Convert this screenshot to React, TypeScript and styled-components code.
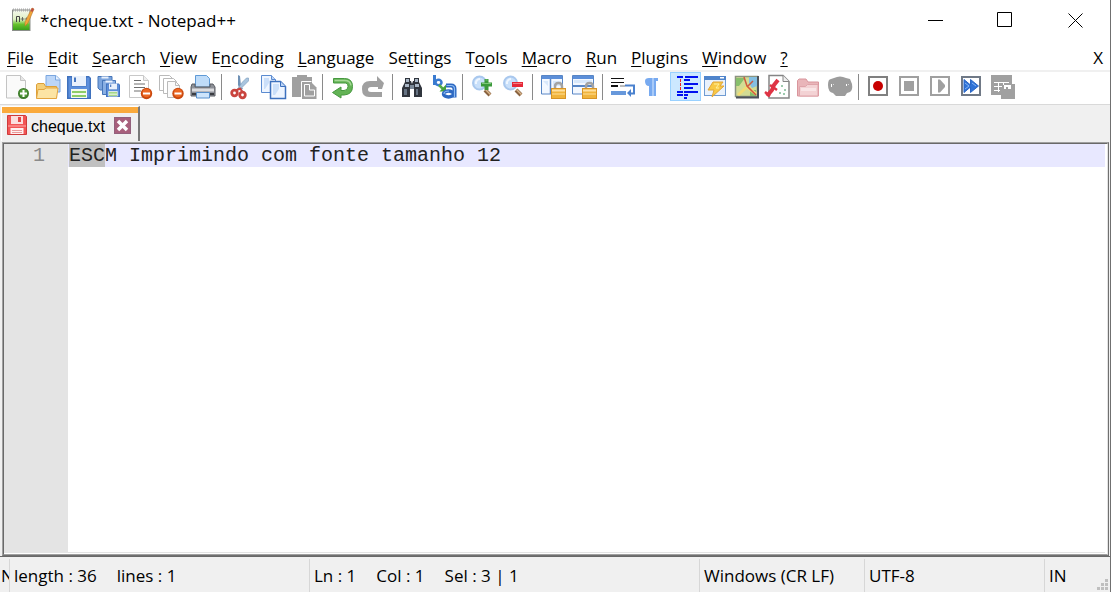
import React from "react";
import styled, { createGlobalStyle } from "styled-components";

const UI_FONT = `"Open Sans", "Noto Sans", sans-serif`;

const GlobalStyle = createGlobalStyle`
  *, *::before, *::after { box-sizing: border-box; }
  html, body { margin: 0; padding: 0; background: #fff; }
  body { font-family: ${UI_FONT}; color: #000; }
  button { font: inherit; color: inherit; background: none; border: 0; margin: 0; padding: 0; }
`;

const AppWindow = styled.div`
  display: flex;
  flex-direction: column;
  min-height: 100vh;
  background: #f0f0f0;
  border-right: 1px solid #707070;
  overflow: hidden;
`;

const TitleBar = styled.header`
  display: flex;
  align-items: center;
  height: 40px;
  padding-left: 11px;
  background: #fff;
`;

const TitleText = styled.h1`
  flex: 1;
  margin: 0;
  padding: 2px 0 0 5px;
  font-size: 17px;
  font-weight: 400;
  line-height: 24px;
  white-space: nowrap;
`;

const CaptionButton = styled.button`
  display: flex;
  align-items: center;
  justify-content: center;
  width: 70px;
  height: 40px;
`;

const MenuBar = styled.nav`
  display: flex;
  align-items: center;
  gap: 14px;
  height: 30px;
  padding: 6px 7px 0;
  background: #fff;
`;

const MenuItem = styled.button`
  font-size: 17px;
  line-height: 24px;
  white-space: nowrap;

  u {
    text-decoration-thickness: 1px;
    text-underline-offset: 2px;
  }
`;

const CloseDocument = styled(MenuItem)`
  margin-left: auto;
`;

const ToolBar = styled.div`
  display: flex;
  height: 35px;
  padding-left: 2px;
  background: #fff;
  border-top: 2px solid #f0f0f0;
  border-bottom: 1px solid #d9d9d9;
`;

const ToolButton = styled.button<{ $active?: boolean }>`
  display: flex;
  flex: none;
  width: 31px;
  height: 29px;
  padding: ${(p) => (p.$active ? "2px 3px" : "3px 4px")};
  border: ${(p) => (p.$active ? "1px solid #99d1ff" : "0")};
  background: ${(p) => (p.$active ? "#cce8ff" : "transparent")};
`;

const ToolDivider = styled.span`
  flex: none;
  width: 8px;
  padding: 2px 0 0 2px;

  &::before {
    content: "";
    display: block;
    width: 1px;
    height: 26px;
    background: #8a8a8a;
  }
`;

const Glyph = styled.svg`
  display: block;
  flex: none;
  overflow: visible;
`;

const TabStrip = styled.div`
  display: flex;
  height: 37px;
  padding: 1px 0 0 1px;
`;

const Tab = styled.div`
  display: flex;
  align-items: center;
  gap: 4px;
  height: 35px;
  padding: 0 7px 0 5px;
  border-left: 1px solid #fff;
  border-right: 2px solid #787878;
  border-top: 1px solid #fff;
  box-shadow: inset 0 6px 0 #faaa3c;
`;

const TabLabel = styled.span`
  padding-top: 6px;
  font-family: "Liberation Sans", sans-serif;
  font-size: 16px;
  line-height: 20px;
`;

const TabIcon = styled.span`
  padding-top: 2px;
`;

const TabClose = styled.button`
  margin: 2px 0 0 5px;
`;

const EditorFrame = styled.main`
  display: flex;
  flex: 1;
  margin: 0 1px 0 2px;
  background: #fff;
  border-style: solid;
  border-width: 1px;
  border-color: #a0a0a0 #707070 #707070 #a0a0a0;
`;

const EditorInner = styled.div`
  display: flex;
  flex: 1;
  border-style: solid;
  border-width: 1px;
  border-color: #696969 #e3e3e3 #a0a0a0 #696969;
`;

const Gutter = styled.div`
  flex: none;
  width: 64px;
  padding-right: 23px;
  margin-bottom: 1px;
  background: #e4e4e4;
  color: #8a8a8a;
  font: 20px/23px "Liberation Mono", monospace;
  text-align: right;
`;

const TextArea = styled.textarea`
  flex: 1;
  min-width: 0;
  margin: 0 2px 1px 0;
  padding: 0 0 0 1px;
  border: 0;
  border-bottom: 1px solid #e3e3e3;
  outline: 0;
  resize: none;
  color: #222;
  font: 20px/23px "Liberation Mono", monospace;
  background:
    linear-gradient(#c0c0c0, #c0c0c0) 1px 0 / 3ch 23px no-repeat,
    linear-gradient(#e8e8ff, #e8e8ff) 0 0 / 100% 23px no-repeat,
    #fff;
`;

const StatusBar = styled.footer`
  display: flex;
  height: 36px;
  padding-top: 2px;
  border-top: 1px solid #696969;
  background: #f0f0f0;
`;

const StatusCell = styled.div<{ $width?: number }>`
  display: flex;
  flex: ${(p) => (p.$width ? `0 0 ${p.$width}px` : "1 1 0")};
  gap: 20px;
  min-width: 0;
  padding: 5px 0 0 4px;
  border-left: 1px solid #d7d7d7;
  font-size: 17px;
  line-height: 24px;
  overflow: hidden;
  white-space: nowrap;

  &:first-child {
    padding-left: 1px;
    border-left: 0;
  }

  &:last-child {
    justify-content: space-between;
  }
`;

const SizeGrip = styled.svg`
  align-self: flex-end;
  margin: 0 2px 2px 0;
`;

const Plus = () => (
  <>
    <circle cx="17.5" cy="18.5" r="5.5" fill="#3e7d2c" />
    <circle cx="17.5" cy="18" r="4" fill="#589b3e" />
    <path d="M17.5 15v7M14 18.5h7" stroke="#fff" strokeWidth="2" />
  </>
);

const Minus = ({ x = 17 }: { x?: number }) => (
  <>
    <circle cx={x} cy="18.5" r="5.7" fill="#c9480f" />
    <circle cx={x} cy="18" r="4.3" fill="#ec6722" />
    <path d={`M${x - 3.5} 18.5h7`} stroke="#fff" strokeWidth="2" />
  </>
);

const Padlock = () => (
  <>
    <path d="M13 15v-3.5q0-3.500 3.500-3.500t3.500 3.500V15" fill="none" stroke="#a3a3a3" strokeWidth="2.500" />
    <rect x="9.500" y="13.500" width="14" height="10" fill="#f0b43c" stroke="#d79426" />
    <path d="M10 15.500h13" stroke="#ffe0a0" strokeWidth="2" />
    <path d="M10 19h13" stroke="#f8ca6a" strokeWidth="2" />
  </>
);

const Floppy = ({ size = 24, x = 0, y = 0 }: { size?: number; x?: number; y?: number }) => (
  <svg x={x} y={y} width={size} height={size} viewBox="0 0 24 24">
    <path d="M0 1h22l2 2v21H0z" fill="#3f71bd" />
    <path d="M1.500 2.500h3v9h15v-9h3v20h-21z" fill="#5c8fdc" />
    <path d="M5 1h14v10H5z" fill="#e9f1fc" />
    <path d="M7 2.500h2v4.500H7z" fill="#4676bf" />
    <path d="M4 14h16v9H4z" fill="#f4f9ee" />
    <path d="M5 16h14v2H5zM5 20h14v2H5z" fill="#8dcd68" />
  </svg>
);

const Magnifier = () => (
  <>
    <path d="M13 15l5 5" stroke="#8a6340" strokeWidth="4" />
    <path d="M13.500 14.500l5 5" stroke="#d7b48a" strokeWidth="1.500" />
    <circle cx="7.500" cy="8" r="6.500" fill="#c9e0fa" stroke="#a9c8ee" strokeWidth="2" />
    <path d="M4 9V7q1-3 4-3" fill="none" stroke="#eef6ff" strokeWidth="2" />
  </>
);

const MacroFrame = ({ stroke }: { stroke: string }) => (
  <rect x="1" y="2" width="18" height="18" fill="#fff" stroke={stroke} strokeWidth="2" />
);

const icons: Record<string, React.ReactNode> = {
  New: (
    <>
      <path d="M.5.5h14l5 5v17.500H.5z" fill="#fafafa" stroke="#c4c4c4" />
      <path d="M14.500.5v5h5" fill="#e6e6e6" stroke="#c4c4c4" />
      <Plus />
    </>
  ),
  Open: (
    <>
      <path d="M9 .5h10l4 4V17H9z" fill="#bcd6f8" stroke="#7aa6df" />
      <path d="M18.500.5v4.500H23" fill="#e8f2ff" stroke="#7aa6df" />
      <path d="M-.5 23V9.500l1.500-1h6l1.500 3H19.500V23z" fill="#f5cf77" stroke="#dda03a" />
      <path d="M1 14.500h6l2-1.500h12l-1.500 10.500H-.5z" fill="#fce4a4" stroke="#e3a540" />
    </>
  ),
  Save: <Floppy x={-1} />,
  "Save All": (
    <>
      <path d="M-1 1.500h14v4H3.500V15H1l-2-2z" fill="#7ba4dd" stroke="#4676b9" />
      <path d="M2.500 1.500h7v2h-7z" fill="#e9f1fc" />
      <path d="M3.500 5.500h13v4h-9v10h-4z" fill="#89afe3" stroke="#4676b9" />
      <path d="M6.500 5.500h7v2h-7z" fill="#e9f1fc" />
      <Floppy size={14} x={7} y={8} />
    </>
  ),
  Close: (
    <>
      <path d="M-.5.5h14l5 5v17H-.5z" fill="#fff" stroke="#c8c8c8" />
      <path d="M13.500.5v5h5" fill="#eee" stroke="#c8c8c8" />
      <path d="M4 5.500h7M4 9h11M4 12.500h11M4 16h7" stroke="#6e6e6e" />
      <Minus x={16.5} />
    </>
  ),
  "Close All": (
    <>
      <path d="M-1.500.5h10l3 3v12h-13z" fill="#fff" stroke="#bababa" />
      <path d="M2.500 3.500h10l3 3v12h-13z" fill="#fff" stroke="#bababa" />
      <path d="M6.500 6.500h8l4 4v12h-12z" fill="#fafafa" stroke="#bababa" />
      <path d="M14.500 6.500v4h4" fill="none" stroke="#bababa" />
      <Minus />
    </>
  ),
  Print: (
    <>
      <path d="M3.500.5h11l3 3V12h-14z" fill="#bfdcf9" stroke="#5f9ad6" />
      <path d="M0 9h3v3h15V9h3l2 3v9H-1v-9z" fill="#8d9097" stroke="#5a5d63" />
      <path d="M0 13.500h22v3H0z" fill="#dcdde0" />
      <path d="M0 18h22v2H0z" fill="#3b3d42" />
      <path d="M4.500 17.500h13v5.500h-13z" fill="#cde4fb" stroke="#578fcb" />
    </>
  ),
  Cut: (
    <>
      <path d="M7 0l2 1 1 10 2 3-3 1-2-5z" fill="#6f91b5" />
      <path d="M17.500 3v3l-6 6-3 3-2-1 5-7 4-4z" fill="#a9c5de" stroke="#7597ba" strokeWidth=".6" />
      <circle cx="3.500" cy="18" r="2.800" fill="none" stroke="#c9443e" strokeWidth="2.800" />
      <circle cx="11.500" cy="20" r="2.800" fill="none" stroke="#c9443e" strokeWidth="2.800" />
      <path d="M5 15.500l4-2 3 4" fill="none" stroke="#c9443e" strokeWidth="2" />
    </>
  ),
  Copy: (
    <>
      <path d="M-.5.5h10l4 4v13h-14z" fill="#eef5ff" stroke="#5b8bd0" />
      <path d="M2 3h5v5l-4 6H2z" fill="#cbdff9" />
      <path d="M9.500.5v4h4" fill="#bcd4f5" stroke="#5b8bd0" />
      <path d="M8.500 6.500h10l5 5v12h-15z" fill="#eef5ff" stroke="#3d71be" strokeWidth="1.500" />
      <path d="M11 9h6v5l-4 6h-2z" fill="#cbdff9" />
      <path d="M18.500 6.500v5h5" fill="#bcd4f5" stroke="#3d71be" />
    </>
  ),
  Paste: (
    <>
      <path d="M-1 2h5V0h10v2h5v20H-1z" fill="#a0a0a0" />
      <path d="M9 7h9l5.500 5.500V24H9z" fill="#a0a0a0" />
      <path d="M8.500 22V6.500h10" fill="none" stroke="#fff" />
      <path d="M11.500 9.500h5v5.500h5v6h-10z" fill="none" stroke="#fff" />
    </>
  ),
  Undo: (
    <>
      <path d="M1.500 3.500h11q8 0 8 8T12 20H9v3L.5 17.500 9 12v3.500h3q4 0 4-4T12 8H1.500z" fill="#63b355" stroke="#46983f" />
      <path d="M2.500 5.500h10q6 0 6.500 5" fill="none" stroke="#a5d896" strokeWidth="1.500" />
    </>
  ),
  Redo: <path d="M19 14h-4v-2H8q-3 0-3 2.500T8 17h11v5H6q-7 0-7-8t8-8h7V1l7 7z" fill="#a0a0a0" />,
  Find: (
    <>
      <path d="M3 3h5v3h1l1 3 1-3h1V3h5v4l3 6v9h-8v-8H8v8H0v-9l3-6z" fill="#30353d" />
      <path d="M4 4h3v3H4zM13 4h3v3h-3zM3 9h4v3H3zM13 9h4v3h-4z" fill="#a9b6c5" />
      <path d="M8 10h4v4H8z" fill="#7d8b9a" />
      <path d="M2 14h3v6H2zM14 14h2v6h-2z" fill="#667383" />
    </>
  ),
  Replace: (
    <>
      <path d="M1.500 0v10" stroke="#3a7bd0" strokeWidth="3" />
      <ellipse cx="5.500" cy="7.500" rx="3" ry="2.700" fill="none" stroke="#3a7bd0" strokeWidth="2.500" />
      <path d="M6 10l5 5" stroke="#55ab48" strokeWidth="2.500" />
      <path d="M13 9.500v7H6.500z" fill="#46a13c" />
      <path d="M13 10.500h5q3.500 0 3.500 3.500v8.500" fill="none" stroke="#2d69c2" strokeWidth="4" />
      <ellipse cx="15.500" cy="19" rx="5" ry="3" fill="#fff" stroke="#2d69c2" strokeWidth="3.500" />
      <path d="M13.500 10.500h4.500q3.500 0 3.500 3.500v8M11 19q0-3 5-3" fill="none" stroke="#8dbbf3" strokeWidth="1.200" />
    </>
  ),
  "Zoom In": (
    <>
      <Magnifier />
      <path d="M12.500 4h4v3.500H20v4h-3.500V15h-4v-3.500H9v-4h3.500z" fill="#3c9a3c" />
      <path d="M13.500 5h2M10 8.500h9" stroke="#7cc67a" />
    </>
  ),
  "Zoom Out": (
    <>
      <Magnifier />
      <path d="M9 7h11v5H9z" fill="#e52838" />
      <path d="M10 8.500h9" stroke="#f37b80" />
    </>
  ),
  "Synchronize Vertical Scrolling": (
    <>
      <path d="M-.5.500h21v18.500h-21z" fill="#f3f8ff" stroke="#5886c5" />
      <path d="M0 1h20v3H0z" fill="#5c8fd9" />
      <path d="M8.500 4v15" stroke="#5886c5" strokeWidth="1.500" />
      <path d="M11 6h8v5h-8zM1 6h5v5z" fill="#d8e8fb" />
      <Padlock />
    </>
  ),
  "Synchronize Horizontal Scrolling": (
    <>
      <path d="M-.5.500h21v18.500h-21z" fill="#f3f8ff" stroke="#5886c5" />
      <path d="M0 1h20v3H0z" fill="#5c8fd9" />
      <path d="M0 11h20" stroke="#5886c5" strokeWidth="2" />
      <path d="M1 5h18v3H1z" fill="#d8e8fb" />
      <Padlock />
    </>
  ),
  "Word Wrap": (
    <>
      <path d="M-1 3.500h13M-1 7.500h13" stroke="#111" />
      <path d="M-1 11h7" stroke="#111" strokeWidth="2" />
      <path d="M8 11h5" stroke="#777" />
      <path d="M-1 18h15" stroke="#6798db" strokeWidth="4" />
      <path d="M13 10.500h9v8h-4" fill="none" stroke="#4b82cf" strokeWidth="2" />
      <path d="M19 14v8l-4-4z" fill="#4b82cf" />
    </>
  ),
  "Show All Characters": (
    <>
      <path d="M2 6q0-3 4-3h9v3h-2v15h-3V6H9v15H6V11q-4 0-4-5z" fill="#78aaf0" />
      <path d="M9 3h2v18H9z" fill="#a8caf8" />
    </>
  ),
  "Show Indent Guide": (
    <>
      <path
        d="M3 2h6M11 2h13M10 5h6M10 9h14M10 13h9M3 17h6M10 17h14M3 20h6M10 20h4M10 23h3"
        stroke="#0010f0"
        strokeWidth="2"
      />
      <path d="M6.500 4v12" stroke="#f02020" strokeDasharray="3 1" />
    </>
  ),
  "User Defined Language": (
    <>
      <rect x="-.5" y="1.500" width="21" height="19" fill="#eaf2fc" stroke="#6f9bd2" />
      <path d="M-1 1h22v4H-1z" fill="#4f84cb" />
      <path d="M15 2h4v1.500h-4z" fill="#fff" />
      <path d="M8 7h10l-3 4h4L7 22l2-7H3z" fill="#f8c945" stroke="#e0a538" />
      <path d="M9 9h5l-3 4h3" fill="none" stroke="#fff0a0" />
    </>
  ),
  "Document Map": (
    <>
      <path d="M-.5 1.500h22v20h-22z" fill="#d3dc94" stroke="#8b9480" strokeWidth="1.500" />
      <path d="M13 2h8v9l-5 2-3-5z" fill="#84bfe2" />
      <path d="M0 3h9l-6 8H0zM14 15h6v6h-6z" fill="#87bf6c" />
      <path d="M2 20l9-8 9 7" fill="none" stroke="#f2dc74" strokeWidth="3" />
      <path d="M8 2l3 9 9 9M11 12l6-6" fill="none" stroke="#cf5a40" strokeWidth="1.500" />
      <path d="M22 1v21.500H0" fill="none" stroke="#4d5158" strokeWidth="2" />
    </>
  ),
  "Function List": (
    <>
      <path d="M2 .5h14l6 6V23H2z" fill="#fff" stroke="#858585" strokeWidth="1.500" />
      <path d="M16 .5v6h6" fill="#eee" stroke="#858585" />
      <path d="M0 21l5-6 2-5 4-5" fill="none" stroke="#df3344" strokeWidth="4" />
      <path d="M-2 17l5 4M3 10l7 5" stroke="#df3344" strokeWidth="2.500" />
      <path d="M15 10v2M18 14v2M12 18h2M16 19h2" stroke="#9dcaae" strokeWidth="2" />
    </>
  ),
  "Folder as Workspace": (
    <>
      <path d="M-.5 21V5.500L1 4h7l2 3h10.500v14z" fill="#e9b5b9" stroke="#d9959c" />
      <path d="M1.500 11.500h6l2-2h10.500v11.500h-18.500z" fill="#f3d2d4" stroke="#dfa4aa" />
      <path d="M3 13h15v3H3z" fill="#f9e5e6" />
    </>
  ),
  Monitoring: (
    <>
      <path d="M5 3q6-3 12 0l4 1 2 5q1 6-2 8l-3 1-2 3H7l-3-3q-5-1-5-8 0-6 3-6z" fill="#9c9c9c" />
      <path d="M2.500 9v3M17.500 9v2" stroke="#fff" />
      <path d="M4 9.500h1M19 9.500h1" stroke="#d8d8d8" />
    </>
  ),
  "Start Recording": (
    <>
      <MacroFrame stroke="#808080" />
      <circle cx="10" cy="11" r="5" fill="#c80000" />
    </>
  ),
  "Stop Recording": (
    <>
      <MacroFrame stroke="#a0a0a0" />
      <path d="M5 6h10v10H5z" fill="#a0a0a0" />
    </>
  ),
  Playback: (
    <>
      <MacroFrame stroke="#a0a0a0" />
      <path d="M8 4.500h2L15 10v2l-5 5.500H8z" fill="#a0a0a0" />
    </>
  ),
  "Run a Macro Multiple Times": (
    <>
      <MacroFrame stroke="#707986" />
      <path d="M3 4.500L9.500 10V4.500L17.500 11l-8 6.500V12L3 17.500z" fill="#2f72d6" stroke="#2a66c4" />
      <path d="M4 8l4 3-4 3M11 8l4 3" fill="none" stroke="#83b4f5" />
    </>
  ),
  "Save Current Recorded Macro": (
    <>
      <path d="M-1 0h21v9h3v15H9v-4H-1z" fill="#a0a0a0" />
      <path d="M2 7.500h15M2 11.500h8M2 15.500h6" stroke="#fff" />
      <path d="M6.500 7v10M11.500 7v3" stroke="#fff" />
      <path d="M12 10h7v4h-3v-2h-2v2h-2z" fill="#fff" />
    </>
  ),
};

const toolGroups = [
  ["New", "Open", "Save", "Save All", "Close", "Close All", "Print"],
  ["Cut", "Copy", "Paste"],
  ["Undo", "Redo"],
  ["Find", "Replace"],
  ["Zoom In", "Zoom Out"],
  ["Synchronize Vertical Scrolling", "Synchronize Horizontal Scrolling"],
  [
    "Word Wrap",
    "Show All Characters",
    "Show Indent Guide",
    "User Defined Language",
    "Document Map",
    "Function List",
    "Folder as Workspace",
    "Monitoring",
  ],
  ["Start Recording", "Stop Recording", "Playback", "Run a Macro Multiple Times", "Save Current Recorded Macro"],
];

/* Menu captions; the ampersand precedes the access key. */
const menus = [
  "&File",
  "&Edit",
  "&Search",
  "&View",
  "E&ncoding",
  "&Language",
  "Se&ttings",
  "T&ools",
  "&Macro",
  "&Run",
  "&Plugins",
  "&Window",
  "&?",
];

const MenuCaption = ({ text }: { text: string }) => {
  const at = text.indexOf("&");
  return (
    <MenuItem type="button">
      {text.slice(0, at)}
      <u>{text[at + 1]}</u>
      {text.slice(at + 2)}
    </MenuItem>
  );
};

const AppLogo = () => (
  <Glyph width="24" height="26" viewBox="0 0 24 26" aria-hidden="true">
    <defs>
      <linearGradient id="page" x1="0" y1="0" x2="0" y2="1">
        <stop offset="0" stopColor="#f5f8ef" />
        <stop offset=".45" stopColor="#dff0c4" />
        <stop offset=".7" stopColor="#66c22c" />
        <stop offset="1" stopColor="#359c18" />
      </linearGradient>
    </defs>
    <rect x="1.500" y="3" width="17.500" height="20.500" fill="url(#page)" stroke="#8b8f8a" />
    <path d="M2 3h17" stroke="#aaa" strokeWidth="3" strokeDasharray="1 1" />
    <path d="M5.500 15V9.500H8.500V15" fill="none" stroke="#444" />
    <path d="M9.500 12h4M11.500 10v4M14 12h3M15.500 10.500v3" stroke="#555" strokeWidth=".8" />
    <path d="M21 1l2 1-6 14-3 3v-4z" fill="#f2a63a" stroke="#b97728" strokeWidth=".6" />
    <path d="M21 1l2 1-1.500 3-2-1z" fill="#bd4e45" />
  </Glyph>
);

export default function App() {
  return (
    <AppWindow>
      <GlobalStyle />
      <TitleBar>
        <AppLogo />
        <TitleText>*cheque.txt - Notepad++</TitleText>
        <CaptionButton type="button" aria-label="Minimize">
          <Glyph width="15" height="15">
            <path d="M0 7.500h15" stroke="#000" />
          </Glyph>
        </CaptionButton>
        <CaptionButton type="button" aria-label="Maximize">
          <Glyph width="16" height="16">
            <path d="M.5.5h14v14H.5z" fill="none" stroke="#000" />
          </Glyph>
        </CaptionButton>
        <CaptionButton type="button" aria-label="Close window">
          <Glyph width="15" height="15">
            <path d="M.5.5l14 14M14.500.5l-14 14" stroke="#000" />
          </Glyph>
        </CaptionButton>
      </TitleBar>

      <MenuBar>
        {menus.map((text) => (
          <MenuCaption key={text} text={text} />
        ))}
        <CloseDocument type="button">X</CloseDocument>
      </MenuBar>

      <ToolBar role="toolbar" aria-label="Tools">
        {toolGroups.map((group, index) => (
          <React.Fragment key={group[0]}>
            {index > 0 && <ToolDivider />}
            {group.map((name) => (
              <ToolButton key={name} type="button" aria-label={name} $active={name === "Show Indent Guide"}>
                <Glyph width="24" height="24" viewBox="0 0 24 24">
                  {icons[name]}
                </Glyph>
              </ToolButton>
            ))}
          </React.Fragment>
        ))}
      </ToolBar>

      <TabStrip>
        <Tab>
          <TabIcon>
            <Glyph width="20" height="20" viewBox="0 0 20 20" aria-hidden="true">
              <path d="M.5.5h18l1 1v18H.5z" fill="#f25555" stroke="#cf3a3a" />
              <path d="M4 1h12v8H4z" fill="#fbdede" />
              <path d="M11 2h3v5h-3z" fill="#e24747" />
              <path d="M1 10h18v2H1z" fill="#f98080" />
              <path d="M3.500 13h13v6h-13z" fill="#fff0f0" />
              <path d="M5 15.500h10M5 17.500h10" stroke="#e99a9a" />
            </Glyph>
          </TabIcon>
          <TabLabel>cheque.txt</TabLabel>
          <TabClose type="button" aria-label="Close cheque.txt">
            <Glyph width="17" height="17" viewBox="0 0 17 17">
              <rect x=".5" y=".5" width="16" height="16" fill="#a8607c" stroke="#93617c" />
              <path d="M4 4l9 9M13 4l-9 9" stroke="#fff" strokeWidth="3.500" />
            </Glyph>
          </TabClose>
        </Tab>
      </TabStrip>

      <EditorFrame>
        <EditorInner>
          <Gutter>1</Gutter>
          <TextArea
            aria-label="Document text"
            spellCheck={false}
            defaultValue="ESCM Imprimindo com fonte tamanho 12"
          />
        </EditorInner>
      </EditorFrame>

      <StatusBar>
        <StatusCell $width={9}>N</StatusCell>
        <StatusCell $width={300}>
          <span>length : 36</span>
          <span>lines : 1</span>
        </StatusCell>
        <StatusCell>
          <span>Ln : 1</span>
          <span>Col : 1</span>
          <span>Sel : 3 | 1</span>
        </StatusCell>
        <StatusCell $width={165}>Windows (CR LF)</StatusCell>
        <StatusCell $width={180}>UTF-8</StatusCell>
        <StatusCell $width={66}>
          <span>IN</span>
          <SizeGrip width="11" height="11" aria-hidden="true">
            <path d="M8 0h3v3H8zM4 4h3v3H4zM8 4h3v3H8zM0 8h3v3H0zM4 8h3v3H4zM8 8h3v3H8z" fill="#bfbfbf" />
          </SizeGrip>
        </StatusCell>
      </StatusBar>
    </AppWindow>
  );
}
